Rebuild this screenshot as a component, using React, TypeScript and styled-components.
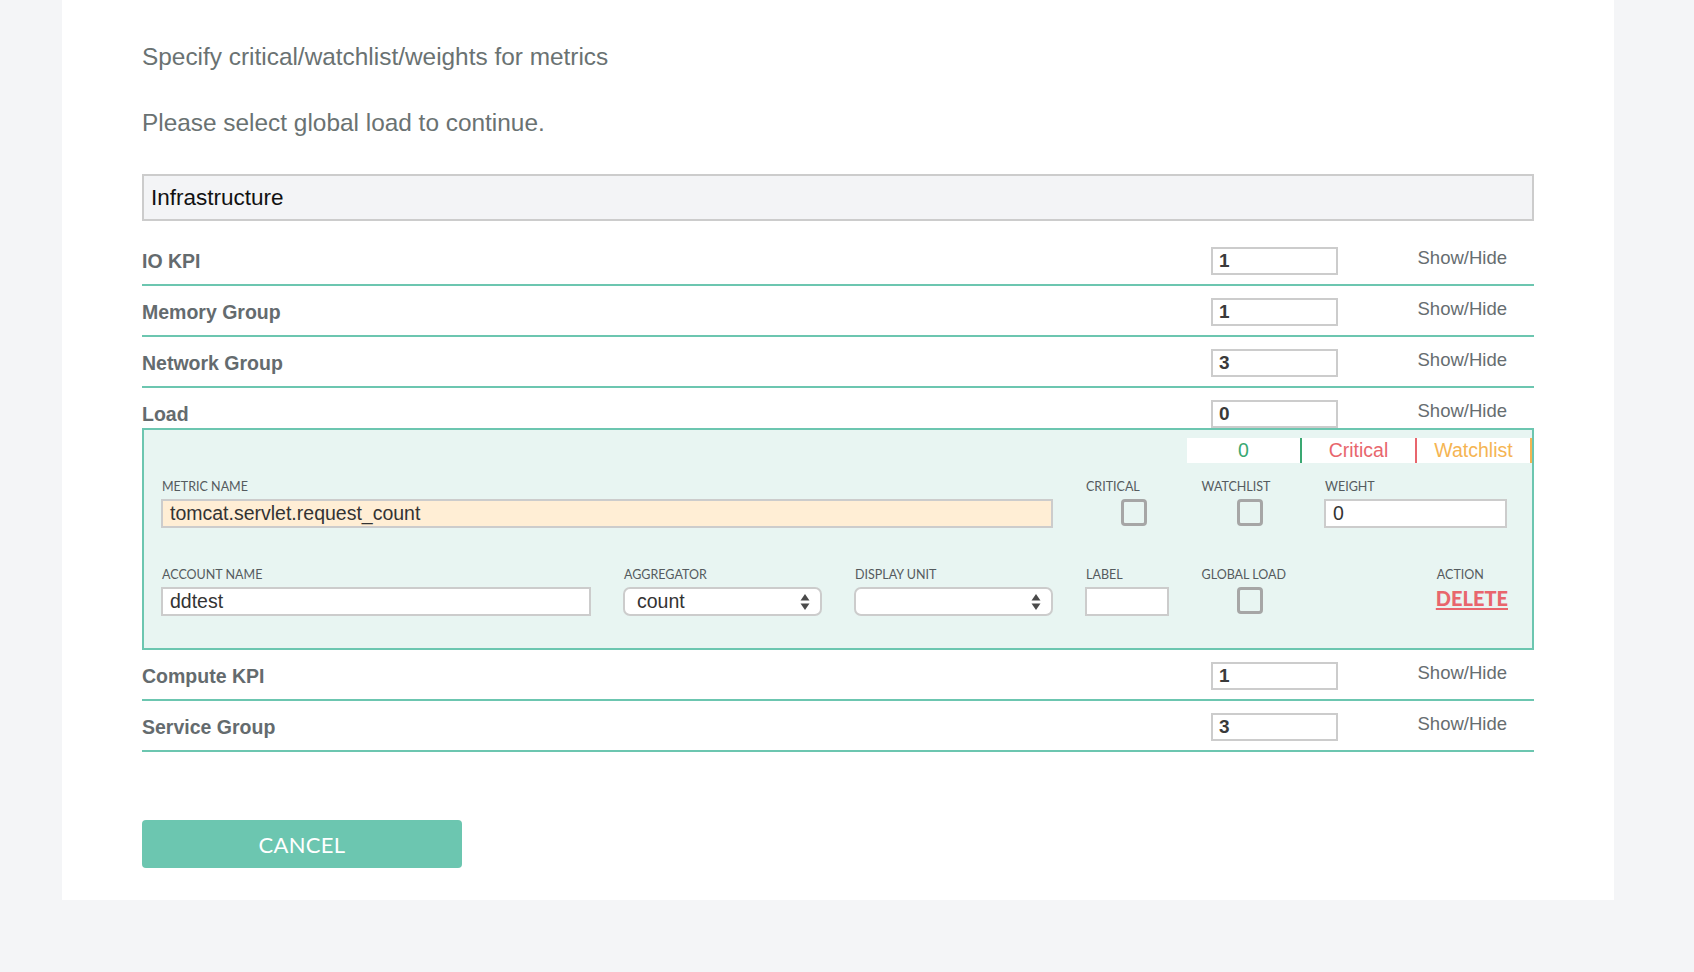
import React from "react";
import styled, { createGlobalStyle } from "styled-components";

const GlobalStyle = createGlobalStyle`
  html, body { margin: 0; padding: 0; }
  body {
    background: #f4f5f7;
    font-family: "Liberation Sans", Arial, sans-serif;
  }
  * { box-sizing: border-box; }
`;

const GREEN = "#6cc6b0";

const Page = styled.div`
  min-height: 972px;
  background: #f4f5f7;
`;

const Panel = styled.main`
  margin-left: 62px;
  width: 1552px;
  background: #ffffff;
  padding: 43px 80px 32px 80px;
`;

const Heading = styled.p`
  margin: 0 0 38px;
  font-size: 24.4px;
  line-height: 28px;
  color: #6a7272;
`;

const GroupSelect = styled.div`
  height: 47px;
  margin-top: -1px;
  border: 2px solid #cccccc;
  background: #f3f4f6;
  padding-left: 7px;
  display: flex;
  align-items: center;
  font-size: 22.5px;
  color: #111;
`;

const GroupList = styled.div`
  margin-top: 14px;
  display: flex;
  flex-direction: column;
`;

const GroupRow = styled.div<{ $open?: boolean }>`
  display: grid;
  grid-template-columns: 1fr 127px 196px;
  align-items: center;
  padding: 12px 0 ${(p) => (p.$open ? "0" : "9px")};
  border-bottom: ${(p) => (p.$open ? "none" : `2px solid ${GREEN}`)};
`;

const GroupName = styled.span`
  font-size: 19.5px;
  font-weight: bold;
  color: #646b6e;
`;

const CountInput = styled.div`
  height: 28px;
  border: 2px solid #cccccc;
  background: #fff;
  padding-left: 6px;
  display: flex;
  align-items: center;
  font-size: 19px;
  font-weight: bold;
  color: #3a3a3a;
`;

const ToggleLink = styled.span`
  justify-self: end;
  padding-right: 27px;
  margin-bottom: 6px;
  font-size: 18.5px;
  color: #666d70;
  cursor: pointer;
`;

const MetricPanel = styled.section`
  border: 2px solid ${GREEN};
  background: #e8f5f2;
  padding: 8px 0 32px;
`;

const StatusTabs = styled.div`
  display: flex;
  justify-content: flex-end;
`;

const StatusTab = styled.span<{ $color: string }>`
  width: 115px;
  height: 25px;
  line-height: 25px;
  text-align: center;
  background: #fff;
  border-right: 2px solid ${(p) => p.$color};
  color: ${(p) => p.$color};
  font-size: 19.5px;
`;

const FieldGrid = styled.div<{ $top: number }>`
  display: grid;
  grid-template-columns: repeat(12, 115.5px);
  margin-top: ${(p) => p.$top}px;
`;

const Field = styled.div<{ $span: number; $inset?: number; $end?: boolean }>`
  grid-column: span ${(p) => p.$span};
  padding: 0 15px 0 17px;
  display: flex;
  flex-direction: column;
  gap: 5px;
  ${(p) => (p.$inset ? `padding-left: ${17 + p.$inset}px; padding-right: ${15 + p.$inset}px;` : "")}
  ${(p) => (p.$end ? "align-items: flex-end; padding-right: 22px;" : "")}
`;

const FieldBody = styled.div`
  display: flex;
  flex-direction: column;
  gap: 5px;
`;

const FieldLabel = styled.label`
  font-family: Lato, "Open Sans", sans-serif;
  font-size: 12.5px;
  line-height: 14px;
  color: #555b5e;
  text-transform: uppercase;
  padding-left: 1px;
  white-space: nowrap;
`;

const TextInput = styled.div<{ $tone?: "peach" }>`
  height: 29px;
  border: 2px solid #cccccc;
  background: ${(p) => (p.$tone === "peach" ? "#ffeed5" : "#ffffff")};
  padding-left: 7px;
  display: flex;
  align-items: center;
  font-size: 19.5px;
  color: #333;
`;

const Checkbox = styled.span`
  display: block;
  width: 26px;
  height: 27px;
  margin-left: 36px;
  border: 3px solid #a6a6a6;
  border-radius: 4px;
`;

const SelectBox = styled.div`
  height: 29px;
  border: 2px solid #cccccc;
  border-radius: 7px;
  background: #fff;
  padding: 0 10px 0 12px;
  display: flex;
  align-items: center;
  justify-content: space-between;
  font-size: 19.5px;
  color: #333;
`;

const DeleteLink = styled.a`
  font-family: Lato, "Liberation Sans", sans-serif;
  font-weight: 900;
  font-size: 20px;
  line-height: 22px;
  color: #e8666d;
  text-decoration: underline;
  text-underline-offset: 2px;
  cursor: pointer;
`;

const CancelButton = styled.button`
  margin-top: 68px;
  width: 320px;
  height: 48px;
  border: none;
  border-radius: 4px;
  background: ${GREEN};
  color: #fff;
  font-family: Lato, "Open Sans", sans-serif;
  font-weight: 400;
  font-size: 22px;
  letter-spacing: 0.3px;
  display: block;
  cursor: pointer;
`;

const Arrows = () => (
  <svg width="10" height="18" viewBox="0 0 10 18">
    <path d="M5 1 L9.5 7.5 H0.5 Z" fill="#4a4a4a" />
    <path d="M5 17 L9.5 10.5 H0.5 Z" fill="#4a4a4a" />
  </svg>
);

type Group = { name: string; count: number; open?: boolean };

const before: Group[] = [
  { name: "IO KPI", count: 1 },
  { name: "Memory Group", count: 1 },
  { name: "Network Group", count: 3 },
  { name: "Load", count: 0, open: true },
];
const after: Group[] = [
  { name: "Compute KPI", count: 1 },
  { name: "Service Group", count: 3 },
];

const Row = ({ g }: { g: Group }) => (
  <GroupRow $open={g.open}>
    <GroupName>{g.name}</GroupName>
    <CountInput>{g.count}</CountInput>
    <ToggleLink>Show/Hide</ToggleLink>
  </GroupRow>
);

export default function App() {
  return (
    <Page>
      <GlobalStyle />
      <Panel>
        <Heading>Specify critical/watchlist/weights for metrics</Heading>
        <Heading>Please select global load to continue.</Heading>
        <GroupSelect>Infrastructure</GroupSelect>
        <GroupList>
          {before.map((g) => (
            <Row key={g.name} g={g} />
          ))}
          <MetricPanel>
            <StatusTabs>
              <StatusTab $color="#3aa872">0</StatusTab>
              <StatusTab $color="#e8666d">Critical</StatusTab>
              <StatusTab $color="#f5b452">Watchlist</StatusTab>
            </StatusTabs>
            <FieldGrid $top={17}>
              <Field $span={8}>
                <FieldLabel>Metric Name</FieldLabel>
                <TextInput $tone="peach">tomcat.servlet.request_count</TextInput>
              </Field>
              <Field $span={1}>
                <FieldLabel>Critical</FieldLabel>
                <Checkbox />
              </Field>
              <Field $span={1}>
                <FieldLabel>Watchlist</FieldLabel>
                <Checkbox />
              </Field>
              <Field $span={2} $inset={8}>
                <FieldLabel>Weight</FieldLabel>
                <TextInput>0</TextInput>
              </Field>
            </FieldGrid>
            <FieldGrid $top={40}>
              <Field $span={4}>
                <FieldLabel>Account Name</FieldLabel>
                <TextInput>ddtest</TextInput>
              </Field>
              <Field $span={2}>
                <FieldLabel>Aggregator</FieldLabel>
                <SelectBox>
                  count
                  <Arrows />
                </SelectBox>
              </Field>
              <Field $span={2}>
                <FieldLabel>Display Unit</FieldLabel>
                <SelectBox>
                  <span />
                  <Arrows />
                </SelectBox>
              </Field>
              <Field $span={1}>
                <FieldLabel>Label</FieldLabel>
                <TextInput />
              </Field>
              <Field $span={1}>
                <FieldLabel>Global Load</FieldLabel>
                <Checkbox />
              </Field>
              <Field $span={2} $end>
                <FieldBody>
                  <FieldLabel>Action</FieldLabel>
                  <DeleteLink>DELETE</DeleteLink>
                </FieldBody>
              </Field>
            </FieldGrid>
          </MetricPanel>
          {after.map((g) => (
            <Row key={g.name} g={g} />
          ))}
        </GroupList>
        <CancelButton>CANCEL</CancelButton>
      </Panel>
    </Page>
  );
}
